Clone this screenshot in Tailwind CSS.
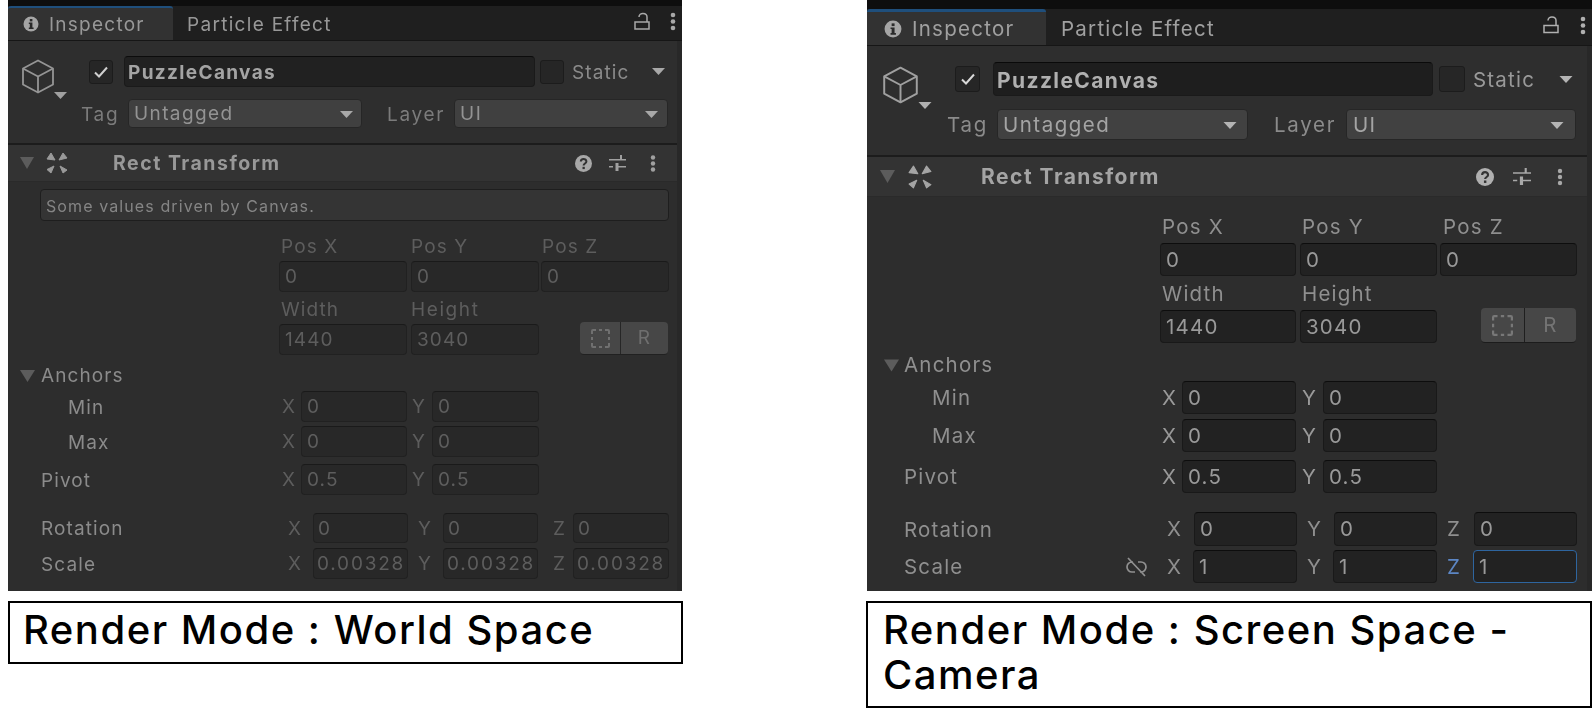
<!DOCTYPE html>
<html lang="en">
<head>
<meta charset="utf-8">
<title>Render Mode comparison</title>
<script src="https://cdn.jsdelivr.net/npm/@tailwindcss/browser@4"></script>
</head>
<body class="bg-white">
<div class="relative flex h-[723px] w-[1592px] items-start overflow-hidden bg-white pl-[8px] font-['Inter',sans-serif]">

<!-- LEFT COLUMN -->
<div class="flex w-[675px] shrink-0 flex-col">
  <div class="relative flex h-[591px] w-[674px] flex-col bg-[#2d2d2d] text-[19px] tracking-[1.1px] text-[#8b8b8b] blur-[0.4px]">
    <div class="absolute bottom-0 right-0 top-[41px] w-[5px] bg-[#282828]"></div>
    <div class="h-[6px] bg-[#0e0e0e]"></div>
    <div class="flex h-[35px] items-stretch border-b border-[#161616] bg-[#1f1f1f]">
      <div class="flex w-[165px] items-center rounded-t-[3px] border-t-2 border-[#1f4f7c] bg-[#323232] pl-[15px]">
        <svg class="h-[16px] w-[16px]" viewBox="0 0 16 16"><circle cx="8" cy="8" r="7.5" fill="#a5a5a5"/><rect x="6.8" y="3" width="2.6" height="2.4" fill="#2a2a2a"/><path d="M5.8 6.6h3.6v5h1.2v1.4H5.8v-1.4h1v-3.6h-1z" fill="#2a2a2a"/></svg>
        <span class="ml-[10px] pt-[3px] text-[19px] tracking-[1.25px] text-[#989898]">Inspector</span>
      </div>
      <span class="ml-[14px] self-center pt-[5px] text-[19px] tracking-[1.3px] text-[#989898]">Particle Effect</span>
      <svg class="ml-[302px] mt-[6px] h-[19px] w-[16px]" viewBox="0 0 16 19" fill="none" stroke="#a8a8a8" stroke-width="1.5"><rect x="1" y="10" width="14" height="7"/><path d="M5 5c0-5 8-4.500 8 0v5"/></svg>
      <svg class="ml-[20px] mt-[6px] h-[19px] w-[6px]" viewBox="0 0 6 19" fill="#a8a8a8"><circle cx="3" cy="3" r="2.300"/><circle cx="3" cy="9.500" r="2.300"/><circle cx="3" cy="16" r="2.300"/></svg>
    </div>
    <div class="flex h-[102px] flex-col bg-[#2e2e2e]">
      <div class="mt-[15px] flex h-[31px] items-center pl-[13px]">
        <div class="relative h-[35px] w-[34px] shrink-0 translate-y-[5px]">
          <svg class="h-[35px] w-[34px]" viewBox="0 0 34 35" fill="none" stroke="#959595" stroke-width="1.800" stroke-linejoin="round"><path d="M17 1.500 32 9.500v16L17 33.500 2 25.500v-16z"/><path d="M2 9.500 17 17.500 32 9.500M17 17.500v16"/></svg>
          <svg class="absolute left-[33px] top-[33px] h-[7px] w-[13px]" viewBox="0 0 13 7"><path d="M0 0h13L6.500 7z" fill="#a0a0a0"/></svg>
        </div>
        <div class="ml-[34px] flex h-[24px] w-[24px] shrink-0 items-center justify-center rounded-[3px] border border-[#1c1c1c] bg-[#262626]">
          <svg class="h-[12px] w-[14px]" viewBox="0 0 14 12" fill="none" stroke="#d0d0d0" stroke-width="2"><path d="M1 6.500 5 10.500 13 1.500"/></svg>
        </div>
        <div class="ml-[11px] flex h-[31px] w-[411px] shrink-0 items-center rounded-[4px] border border-[#1a1a1a] border-t-[#0c0c0c] bg-[#212121] pl-[3px] pt-[3px] text-[19px] font-bold tracking-[1.350px] text-[#a4a4a4]">PuzzleCanvas</div>
        <div class="ml-[5px] h-[24px] w-[24px] shrink-0 rounded-[3px] border border-[#1c1c1c] bg-[#262626]"></div>
        <span class="ml-[8px] w-[80px] shrink-0 pt-[3px] text-[#8b8b8b]">Static</span>
        <svg class="h-[7px] w-[13px] shrink-0" viewBox="0 0 13 7"><path d="M0 0h13L6.500 7z" fill="#a8a8a8"/></svg>
      </div>
      <div class="mt-[12px] flex h-[29px] items-center pl-[73px]">
        <span class="w-[47px] shrink-0 pt-[3px] tracking-[1.700px] text-[#7b7b7b]">Tag</span>
        <div class="flex h-[29px] w-[234px] shrink-0 items-center justify-between rounded-[4px] border border-[#262626] bg-[#404040] pl-[5px] pr-[8px] pt-[2px] tracking-[1.400px] text-[#939393]">Untagged<svg class="h-[7px] w-[13px]" viewBox="0 0 13 7"><path d="M0 0h13L6.500 7z" fill="#a8a8a8"/></svg></div>
        <span class="ml-[25px] w-[67px] shrink-0 pt-[3px] tracking-[1.700px] text-[#7b7b7b]">Layer</span>
        <div class="flex h-[29px] w-[214px] shrink-0 items-center justify-between rounded-[4px] border border-[#262626] bg-[#404040] pl-[5px] pr-[9px] pt-[2px] tracking-[1.500px] text-[#939393]">UI<svg class="h-[7px] w-[13px]" viewBox="0 0 13 7"><path d="M0 0h13L6.500 7z" fill="#a8a8a8"/></svg></div>
      </div>
    </div>
    <div class="h-[2px] bg-[#1c1c1c]"></div>
    <div class="flex h-[37px] items-center border-b border-[#2a2a2a] bg-[#333333] pl-[12px]">
      <svg class="h-[12px] w-[14px]" viewBox="0 0 14 12"><path d="M0 0h14L7 12z" fill="#5c5c5c"/></svg>
      <svg class="ml-[12px] h-[22px] w-[22px]" viewBox="0 0 22 22" fill="#9a9a9a" stroke="#9a9a9a" stroke-linejoin="round"><path d="M5 1 9 8 1 7zM17 1 21 6 13 8zM8 14 5 21 1 17.500zM14 14 21 18 17 21z"/></svg>
      <span class="ml-[45px] w-[462px] pt-[1px] text-[19.500px] font-bold tracking-[1.500px] text-[#989898]">Rect Transform</span>
      <svg class="h-[17px] w-[17px]" viewBox="0 0 17 17"><circle cx="8.500" cy="8.500" r="8.500" fill="#a8a8a8"/><path d="M5.800 6.500c0-3.500 5.600-3.500 5.600 0 0 2-2.800 2-2.800 4" fill="none" stroke="#333" stroke-width="2"/><rect x="7.500" y="11.800" width="2.300" height="2.300" fill="#333"/></svg>
      <svg class="ml-[17px] h-[16px] w-[17px]" viewBox="0 0 17 16" fill="#a0a0a0"><path d="M0 4h11V0h2v4h4v1.500H0zM0 11h4v1.500H0zM6.500 8h3v3H17v1.500H9.500V16h-3z"/></svg>
      <svg class="ml-[24px] h-[17px] w-[6px]" viewBox="0 0 6 17" fill="#a0a0a0"><circle cx="3" cy="2.500" r="2.200"/><circle cx="3" cy="8.500" r="2.200"/><circle cx="3" cy="14.500" r="2.200"/></svg>
    </div>
    <div class="ml-[32px] mt-[7px] flex h-[32px] w-[629px] items-center rounded-[4px] border border-[#1e1e1e] bg-[#343434] pl-[5px] pt-[1px] text-[16px] tracking-[1.100px] text-[#858585]">Some values driven by Canvas.</div>

    <div class="mt-[11px] flex h-[29px] items-center pl-[273px] pt-[2px] text-[#5d5d5d]"><span class="w-[130px]">Pos X</span><span class="w-[131px]">Pos Y</span><span>Pos Z</span></div>
    <div class="flex h-[31px] items-center pl-[271px] text-[#5d5d5d]">
      <div class="flex h-[31px] w-[128px] items-center rounded-[4px] border border-[#212121] border-t-[#1a1a1a] bg-[#282828] pl-[5px] pt-[2px]">0</div>
      <div class="ml-[4px] flex h-[31px] w-[128px] items-center rounded-[4px] border border-[#212121] border-t-[#1a1a1a] bg-[#282828] pl-[5px] pt-[2px]">0</div>
      <div class="ml-[2px] flex h-[31px] w-[128px] items-center rounded-[4px] border border-[#212121] border-t-[#1a1a1a] bg-[#282828] pl-[5px] pt-[2px]">0</div>
    </div>
    <div class="mt-[2px] flex h-[30px] items-center pl-[273px] pt-[2px] text-[#5d5d5d]"><span class="w-[130px]">Width</span><span class="tracking-[1.600px]">Height</span></div>
    <div class="flex h-[31px] items-center pl-[271px] text-[#5d5d5d]">
      <div class="flex h-[31px] w-[128px] items-center rounded-[4px] border border-[#212121] border-t-[#1a1a1a] bg-[#282828] pl-[5px] pt-[2px]">1440</div>
      <div class="ml-[4px] flex h-[31px] w-[128px] items-center rounded-[4px] border border-[#212121] border-t-[#1a1a1a] bg-[#282828] pl-[5px] pt-[2px]">3040</div>
      <div class="ml-[41px] flex h-[33px] w-[88px] -translate-y-[1px] overflow-hidden rounded-[4px] border-b border-[#212121] bg-[#474747]">
        <div class="flex w-[41px] items-center justify-center border-r border-[#262626]"><svg class="h-[19px] w-[19px]" viewBox="0 0 19 19" fill="none" stroke="#707070" stroke-width="2"><path d="M1 5V2a1 1 0 0 1 1-1h3M8 1h3M14 1h3a1 1 0 0 1 1 1v3M18 8v3M18 14v3a1 1 0 0 1-1 1h-3M11 18H8M5 18H2a1 1 0 0 1-1-1v-3M1 11V8"/></svg></div>
        <div class="flex flex-1 items-center justify-center text-[#6f6f6f]">R</div>
      </div>
    </div>
    <div class="mt-[5px] flex h-[30px] items-center pl-[12px] pt-[2px] text-[#8b8b8b]"><svg class="h-[12px] w-[15px]" viewBox="0 0 15 12"><path d="M0 0h15L7.500 12z" fill="#5c5c5c"/></svg><span class="ml-[6px]">Anchors</span></div>
    <div class="mt-[1px] flex h-[31px] items-center pl-[60px] text-[#5d5d5d]"><span class="w-[214px] pt-[3px] text-[#8b8b8b]">Min</span><span class="w-[19px] pt-[2px]">X</span><div class="flex h-[31px] w-[106px] items-center rounded-[4px] border border-[#212121] border-t-[#1a1a1a] bg-[#282828] pl-[5px] pt-[2px]">0</div><span class="ml-[5px] w-[20px] pt-[2px]">Y</span><div class="flex h-[31px] w-[107px] items-center rounded-[4px] border border-[#212121] border-t-[#1a1a1a] bg-[#282828] pl-[5px] pt-[2px]">0</div></div>
    <div class="mt-[4px] flex h-[31px] items-center pl-[60px] text-[#5d5d5d]"><span class="w-[214px] pt-[3px] text-[#8b8b8b]">Max</span><span class="w-[19px] pt-[2px]">X</span><div class="flex h-[31px] w-[106px] items-center rounded-[4px] border border-[#212121] border-t-[#1a1a1a] bg-[#282828] pl-[5px] pt-[2px]">0</div><span class="ml-[5px] w-[20px] pt-[2px]">Y</span><div class="flex h-[31px] w-[107px] items-center rounded-[4px] border border-[#212121] border-t-[#1a1a1a] bg-[#282828] pl-[5px] pt-[2px]">0</div></div>
    <div class="mt-[7px] flex h-[31px] items-center pl-[33px] text-[#5d5d5d]"><span class="w-[241px] pt-[3px] text-[#8b8b8b]">Pivot</span><span class="w-[19px] pt-[2px]">X</span><div class="flex h-[31px] w-[106px] items-center rounded-[4px] border border-[#212121] border-t-[#1a1a1a] bg-[#282828] pl-[5px] pt-[2px]">0.5</div><span class="ml-[5px] w-[20px] pt-[2px]">Y</span><div class="flex h-[31px] w-[107px] items-center rounded-[4px] border border-[#212121] border-t-[#1a1a1a] bg-[#282828] pl-[5px] pt-[2px]">0.5</div></div>
    <div class="mt-[18px] flex h-[30px] items-center pl-[33px] text-[#5d5d5d]"><span class="w-[247px] pt-[3px] text-[#8b8b8b]">Rotation</span><span class="w-[25px] pt-[2px]">X</span><div class="flex h-[30px] w-[95px] items-center rounded-[4px] border border-[#212121] border-t-[#1a1a1a] bg-[#282828] pl-[4px] pt-[2px]">0</div><span class="ml-[10px] w-[25px] pt-[2px]">Y</span><div class="flex h-[30px] w-[95px] items-center rounded-[4px] border border-[#212121] border-t-[#1a1a1a] bg-[#282828] pl-[4px] pt-[2px]">0</div><span class="ml-[15px] w-[20px] pt-[2px]">Z</span><div class="flex h-[30px] w-[96px] items-center rounded-[4px] border border-[#212121] border-t-[#1a1a1a] bg-[#282828] pl-[4px] pt-[2px]">0</div></div>
    <div class="mt-[5px] flex h-[31px] items-center pl-[33px] text-[#5d5d5d]"><span class="w-[247px] pt-[3px] text-[#8b8b8b]">Scale</span><span class="w-[25px] pt-[2px]">X</span><div class="flex h-[31px] w-[95px] items-center overflow-hidden whitespace-nowrap rounded-[4px] border border-[#212121] border-t-[#1a1a1a] bg-[#282828] pl-[3px] pt-[2px] tracking-[1.800px]">0.00328</div><span class="ml-[10px] w-[25px] pt-[2px]">Y</span><div class="flex h-[31px] w-[95px] items-center overflow-hidden whitespace-nowrap rounded-[4px] border border-[#212121] border-t-[#1a1a1a] bg-[#282828] pl-[3px] pt-[2px] tracking-[1.800px]">0.00328</div><span class="ml-[15px] w-[20px] pt-[2px]">Z</span><div class="flex h-[31px] w-[96px] items-center overflow-hidden whitespace-nowrap rounded-[4px] border border-[#212121] border-t-[#1a1a1a] bg-[#282828] pl-[3px] pt-[2px] tracking-[1.800px]">0.00328</div></div>
  </div>
  <div class="mt-[10px] flex h-[63px] w-[675px] items-center border-2 border-black pb-[6px] pl-[13px] text-[40px] font-medium leading-[45px] tracking-[1.500px] text-black">Render Mode : World Space</div>
</div>

<!-- RIGHT COLUMN -->
<div class="ml-[184px] flex w-[725px] shrink-0 flex-col">
  <div class="relative flex h-[591px] w-[725px] flex-col bg-[#2d2d2d] text-[20.500px] tracking-[1.200px] text-[#999999] blur-[0.4px]">
    <div class="absolute bottom-0 right-0 top-[46px] w-[5px] bg-[#282828]"></div>
    <div class="h-[9px] bg-[#0e0e0e]"></div>
    <div class="flex h-[37px] items-stretch border-b border-[#161616] bg-[#1f1f1f]">
      <div class="flex w-[179px] items-center rounded-t-[3px] border-t-[3px] border-[#1f4f7c] bg-[#323232] pl-[17px]">
        <svg class="h-[18px] w-[18px]" viewBox="0 0 16 16"><circle cx="8" cy="8" r="7.500" fill="#a5a5a5"/><rect x="6.800" y="3" width="2.600" height="2.400" fill="#2a2a2a"/><path d="M5.800 6.600h3.600v5h1.200v1.400H5.800v-1.400h1v-3.600h-1z" fill="#2a2a2a"/></svg>
        <span class="ml-[10px] pt-[1px] text-[20.500px] tracking-[1.250px] text-[#a0a0a0]">Inspector</span>
      </div>
      <span class="ml-[15px] self-center pt-[4px] text-[20.500px] tracking-[1.250px] text-[#a0a0a0]">Particle Effect</span>
      <svg class="ml-[328px] mt-[6px] h-[20px] w-[16px]" viewBox="0 0 16 19" fill="none" stroke="#b0b0b0" stroke-width="1.500"><rect x="1" y="10" width="14" height="7"/><path d="M5 5c0-5 8-4.500 8 0v5"/></svg>
      <svg class="ml-[21px] mt-[7px] h-[19px] w-[6px]" viewBox="0 0 6 19" fill="#b0b0b0"><circle cx="3" cy="3" r="2.300"/><circle cx="3" cy="9.500" r="2.300"/><circle cx="3" cy="16" r="2.300"/></svg>
    </div>
    <div class="flex h-[109px] flex-col bg-[#2e2e2e]">
      <div class="mt-[16px] flex h-[34px] items-center pl-[15px]">
        <div class="relative h-[38px] w-[37px] shrink-0 translate-y-[6px]">
          <svg class="h-[38px] w-[37px]" viewBox="0 0 34 35" fill="none" stroke="#a0a0a0" stroke-width="1.800" stroke-linejoin="round"><path d="M17 1.500 32 9.500v16L17 33.500 2 25.500v-16z"/><path d="M2 9.500 17 17.500 32 9.500M17 17.500v16"/></svg>
          <svg class="absolute left-[36px] top-[36px] h-[7px] w-[14px]" viewBox="0 0 13 7"><path d="M0 0h13L6.500 7z" fill="#b0b0b0"/></svg>
        </div>
        <div class="ml-[36px] flex h-[26px] w-[25px] shrink-0 items-center justify-center rounded-[3px] border border-[#1c1c1c] bg-[#262626]">
          <svg class="h-[12px] w-[14px]" viewBox="0 0 14 12" fill="none" stroke="#d8d8d8" stroke-width="2"><path d="M1 6.500 5 10.500 13 1.500"/></svg>
        </div>
        <div class="ml-[13px] flex h-[34px] w-[440px] shrink-0 items-center rounded-[4px] border border-[#1a1a1a] border-t-[#0a0a0a] bg-[#1e1e1e] pl-[3px] pt-[3px] text-[21px] font-bold tracking-[1.400px] text-[#b0b0b0]">PuzzleCanvas</div>
        <div class="ml-[6px] h-[26px] w-[26px] shrink-0 rounded-[3px] border border-[#1c1c1c] bg-[#262626]"></div>
        <span class="ml-[8px] w-[86px] shrink-0 pt-[2px]">Static</span>
        <svg class="h-[7px] w-[14px] shrink-0" viewBox="0 0 13 7"><path d="M0 0h13L6.500 7z" fill="#b4b4b4"/></svg>
      </div>
      <div class="mt-[13px] flex h-[31px] items-center pl-[80px]">
        <span class="w-[50px] shrink-0 pt-[2px] tracking-[1.700px] text-[#8b8b8b]">Tag</span>
        <div class="flex h-[31px] w-[251px] shrink-0 items-center justify-between rounded-[4px] border border-[#262626] bg-[#414141] pl-[5px] pr-[10px] pt-[2px] tracking-[1.500px] text-[#a4a4a4]">Untagged<svg class="h-[7px] w-[14px]" viewBox="0 0 13 7"><path d="M0 0h13L6.500 7z" fill="#b4b4b4"/></svg></div>
        <span class="ml-[26px] w-[72px] shrink-0 pt-[2px] tracking-[1.700px] text-[#8b8b8b]">Layer</span>
        <div class="flex h-[31px] w-[230px] shrink-0 items-center justify-between rounded-[4px] border border-[#262626] bg-[#414141] pl-[6px] pr-[11px] pt-[2px] text-[#a4a4a4]">UI<svg class="h-[7px] w-[14px]" viewBox="0 0 13 7"><path d="M0 0h13L6.500 7z" fill="#b4b4b4"/></svg></div>
      </div>
    </div>
    <div class="h-[2px] bg-[#1c1c1c]"></div>
    <div class="flex h-[40px] items-center border-b border-[#2a2a2a] bg-[#333333] pl-[13px]">
      <svg class="h-[13px] w-[15px]" viewBox="0 0 14 12"><path d="M0 0h14L7 12z" fill="#5c5c5c"/></svg>
      <svg class="ml-[13px] h-[24px] w-[24px]" viewBox="0 0 22 22" fill="#a4a4a4" stroke="#a4a4a4" stroke-linejoin="round"><path d="M5 1 9 8 1 7zM17 1 21 6 13 8zM8 14 5 21 1 17.500zM14 14 21 18 17 21z"/></svg>
      <span class="ml-[49px] w-[495px] pt-[1px] text-[21px] font-bold tracking-[1.500px] text-[#a4a4a4]">Rect Transform</span>
      <svg class="h-[18px] w-[18px]" viewBox="0 0 17 17"><circle cx="8.500" cy="8.500" r="8.500" fill="#b0b0b0"/><path d="M5.800 6.500c0-3.500 5.600-3.500 5.600 0 0 2-2.800 2-2.800 4" fill="none" stroke="#333" stroke-width="2"/><rect x="7.500" y="11.800" width="2.300" height="2.300" fill="#333"/></svg>
      <svg class="ml-[19px] h-[17px] w-[18px]" viewBox="0 0 17 16" fill="#a8a8a8"><path d="M0 4h11V0h2v4h4v1.500H0zM0 11h4v1.500H0zM6.500 8h3v3H17v1.500H9.500V16h-3z"/></svg>
      <svg class="ml-[26px] h-[18px] w-[6px]" viewBox="0 0 6 17" fill="#a8a8a8"><circle cx="3" cy="2.500" r="2.200"/><circle cx="3" cy="8.500" r="2.200"/><circle cx="3" cy="14.500" r="2.200"/></svg>
    </div>

    <div class="mt-[12px] flex h-[34px] items-center pl-[295px] pt-[2px] text-[#8f8f8f]"><span class="w-[140px]">Pos X</span><span class="w-[141px]">Pos Y</span><span>Pos Z</span></div>
    <div class="flex h-[33px] items-center pl-[293px]">
      <div class="flex h-[33px] w-[136px] items-center rounded-[4px] border border-[#191919] border-t-[#0d0d0d] bg-[#222222] pl-[5px] pt-[1px]">0</div>
      <div class="ml-[4px] flex h-[33px] w-[137px] items-center rounded-[4px] border border-[#191919] border-t-[#0d0d0d] bg-[#222222] pl-[5px] pt-[1px]">0</div>
      <div class="ml-[3px] flex h-[33px] w-[137px] items-center rounded-[4px] border border-[#191919] border-t-[#0d0d0d] bg-[#222222] pl-[5px] pt-[1px]">0</div>
    </div>
    <div class="flex h-[34px] items-center pl-[295px] pt-[2px] text-[#8f8f8f]"><span class="w-[140px]">Width</span><span>Height</span></div>
    <div class="flex h-[33px] items-center pl-[293px]">
      <div class="flex h-[33px] w-[136px] items-center rounded-[4px] border border-[#191919] border-t-[#0d0d0d] bg-[#222222] pl-[5px] pt-[1px]">1440</div>
      <div class="ml-[4px] flex h-[33px] w-[137px] items-center rounded-[4px] border border-[#191919] border-t-[#0d0d0d] bg-[#222222] pl-[5px] pt-[1px]">3040</div>
      <div class="ml-[44px] flex h-[35px] w-[95px] -translate-y-[1px] overflow-hidden rounded-[4px] border-b border-[#1c1c1c] bg-[#474747]">
        <div class="flex w-[44px] items-center justify-center border-r border-[#1f1f1f]"><svg class="h-[21px] w-[21px]" viewBox="0 0 19 19" fill="none" stroke="#787878" stroke-width="2"><path d="M1 5V2a1 1 0 0 1 1-1h3M8 1h3M14 1h3a1 1 0 0 1 1 1v3M18 8v3M18 14v3a1 1 0 0 1-1 1h-3M11 18H8M5 18H2a1 1 0 0 1-1-1v-3M1 11V8"/></svg></div>
        <div class="flex flex-1 items-center justify-center text-[#747474]">R</div>
      </div>
    </div>
    <div class="mt-[4px] flex h-[34px] items-center pl-[17px] pt-[2px] text-[#8f8f8f]"><svg class="h-[13px] w-[15px]" viewBox="0 0 15 12"><path d="M0 0h15L7.500 12z" fill="#5c5c5c"/></svg><span class="ml-[5px]">Anchors</span></div>
    <div class="flex h-[33px] items-center pl-[65px]"><span class="w-[230px] pt-[2px] text-[#8f8f8f]">Min</span><span class="w-[20px] pt-[1px]">X</span><div class="flex h-[33px] w-[114px] items-center rounded-[4px] border border-[#191919] border-t-[#0d0d0d] bg-[#222222] pl-[5px] pt-[1px]">0</div><span class="ml-[6px] w-[21px] pt-[1px]">Y</span><div class="flex h-[33px] w-[114px] items-center rounded-[4px] border border-[#191919] border-t-[#0d0d0d] bg-[#222222] pl-[5px] pt-[1px]">0</div></div>
    <div class="mt-[5px] flex h-[33px] items-center pl-[65px]"><span class="w-[230px] pt-[2px] text-[#8f8f8f]">Max</span><span class="w-[20px] pt-[1px]">X</span><div class="flex h-[33px] w-[114px] items-center rounded-[4px] border border-[#191919] border-t-[#0d0d0d] bg-[#222222] pl-[5px] pt-[1px]">0</div><span class="ml-[6px] w-[21px] pt-[1px]">Y</span><div class="flex h-[33px] w-[114px] items-center rounded-[4px] border border-[#191919] border-t-[#0d0d0d] bg-[#222222] pl-[5px] pt-[1px]">0</div></div>
    <div class="mt-[8px] flex h-[33px] items-center pl-[37px]"><span class="w-[258px] pt-[2px] text-[#8f8f8f]">Pivot</span><span class="w-[20px] pt-[1px]">X</span><div class="flex h-[33px] w-[114px] items-center rounded-[4px] border border-[#191919] border-t-[#0d0d0d] bg-[#222222] pl-[5px] pt-[1px]">0.5</div><span class="ml-[6px] w-[21px] pt-[1px]">Y</span><div class="flex h-[33px] w-[114px] items-center rounded-[4px] border border-[#191919] border-t-[#0d0d0d] bg-[#222222] pl-[5px] pt-[1px]">0.5</div></div>
    <div class="mt-[19px] flex h-[34px] items-center pl-[37px]"><span class="w-[263px] pt-[2px] text-[#8f8f8f]">Rotation</span><span class="w-[27px] pt-[1px] text-[#8f8f8f]">X</span><div class="flex h-[34px] w-[103px] items-center rounded-[4px] border border-[#191919] border-t-[#0d0d0d] bg-[#222222] pl-[5px] pt-[1px]">0</div><span class="ml-[10px] w-[27px] pt-[1px] text-[#8f8f8f]">Y</span><div class="flex h-[34px] w-[103px] items-center rounded-[4px] border border-[#191919] border-t-[#0d0d0d] bg-[#222222] pl-[5px] pt-[1px]">0</div><span class="ml-[10px] w-[27px] pt-[1px] text-[#8f8f8f]">Z</span><div class="flex h-[34px] w-[103px] items-center rounded-[4px] border border-[#191919] border-t-[#0d0d0d] bg-[#222222] pl-[5px] pt-[1px]">0</div></div>
    <div class="mt-[4px] flex h-[33px] items-center pl-[37px]"><span class="w-[221px] pt-[2px] text-[#8f8f8f]">Scale</span><svg class="h-[20px] w-[23px] shrink-0" viewBox="0 0 23 20" fill="none" stroke="#909090" stroke-width="1.700"><path d="M8 5H7a5 5 0 0 0 0 10h3M13 5h3a5 5 0 0 1 0 10h-1M3 1l17 18"/></svg><span class="ml-[19px] w-[26px] pt-[1px] text-[#8f8f8f]">X</span><div class="flex h-[33px] w-[104px] items-center rounded-[4px] border border-[#191919] border-t-[#0d0d0d] bg-[#222222] pl-[5px] pt-[1px]">1</div><span class="ml-[10px] w-[26px] pt-[1px] text-[#8f8f8f]">Y</span><div class="flex h-[33px] w-[104px] items-center rounded-[4px] border border-[#191919] border-t-[#0d0d0d] bg-[#222222] pl-[5px] pt-[1px]">1</div><span class="ml-[10px] w-[26px] pt-[1px] text-[#5c86c4]">Z</span><div class="flex h-[33px] w-[104px] items-center rounded-[4px] border-[1.500px] border-[#2e659f] bg-[#222222] pl-[5px] pt-[1px]">1</div></div>
  </div>
  <div class="-ml-[1px] mt-[10px] h-[107px] w-[726px] border-2 border-black pl-[15px] pt-[4px] text-[40px] font-medium leading-[45px] tracking-[1.500px] text-black">Render Mode : Screen Space -<br>Camera</div>
</div>

</div>
</body>
</html>
